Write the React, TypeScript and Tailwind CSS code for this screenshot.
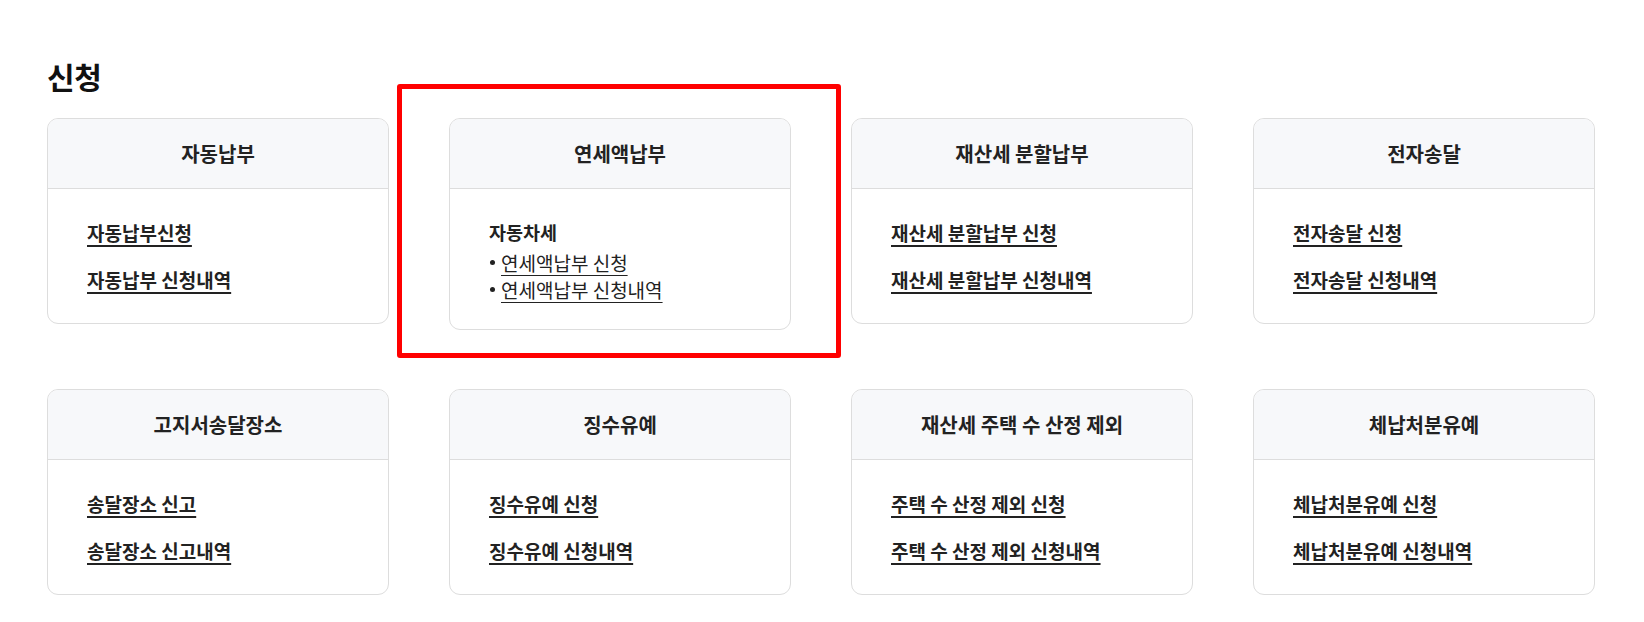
import React from "react";

type Simple = { title: string; links: string[] };

const row1: Simple[] = [
  { title: "자동납부", links: ["자동납부신청", "자동납부 신청내역"] },
  { title: "연세액납부", links: [] },
  { title: "재산세 분할납부", links: ["재산세 분할납부 신청", "재산세 분할납부 신청내역"] },
  { title: "전자송달", links: ["전자송달 신청", "전자송달 신청내역"] },
];

const row2: Simple[] = [
  { title: "고지서송달장소", links: ["송달장소 신고", "송달장소 신고내역"] },
  { title: "징수유예", links: ["징수유예 신청", "징수유예 신청내역"] },
  { title: "재산세 주택 수 산정 제외", links: ["주택 수 산정 제외 신청", "주택 수 산정 제외 신청내역"] },
  { title: "체납처분유예", links: ["체납처분유예 신청", "체납처분유예 신청내역"] },
];

function CardShell({ title, children }: { title: string; children: React.ReactNode }) {
  return (
    <div className="rounded-[11px] border border-[#dddddd] bg-white overflow-hidden">
      <div className="h-[70px] bg-[#f7f8fa] border-b border-[#dddddd] flex items-center justify-center text-[20px] font-bold text-[#222]">
        {title}
      </div>
      {children}
    </div>
  );
}

function SimpleCard({ c }: { c: Simple }) {
  return (
    <CardShell title={c.title}>
      <div className="px-[39px] pt-[30px] pb-[30px] flex flex-col gap-[20px]">
        {c.links.map((l) => (
          <a
            key={l}
            href="#"
            className="self-start text-[19px] leading-[27px] font-bold text-[#222] underline underline-offset-[4px] decoration-[1.5px]"
          >
            {l}
          </a>
        ))}
      </div>
    </CardShell>
  );
}

function AnnualCard() {
  return (
    <div className="relative">
      <CardShell title="연세액납부">
        <div className="px-[39px] pt-[30px] pb-[26px]">
          <div className="text-[18.5px] leading-[26px] font-bold text-[#222]">자동차세</div>
          <ul className="mt-[4px]">
            {["연세액납부 신청", "연세액납부 신청내역"].map((l) => (
              <li key={l} className="flex items-center text-[19px] leading-[27px] text-[#222]">
                <span className="w-[5px] h-[5px] rounded-full bg-[#222] ml-[1px] mr-[6px]" />
                <a href="#" className="underline underline-offset-[4px] decoration-1">
                  {l}
                </a>
              </li>
            ))}
          </ul>
        </div>
      </CardShell>
      <div className="absolute left-[-52px] top-[-34px] right-[-50px] bottom-[-28px] border-[5px] border-[#ff0000] rounded-[3px] pointer-events-none" />
    </div>
  );
}

export default function App() {
  return (
    <div className="w-[1644px] h-[622px] bg-white font-['Noto_Sans_CJK_KR','Noto_Sans',sans-serif] text-[#222]">
      <div className="pl-[47px] pt-[56px]">
        <h2 className="text-[30px] leading-[40px] font-bold tracking-[-0.4px] text-[#111] mb-[22px]">신청</h2>
        <div className="w-[1548px] grid grid-cols-4 gap-x-[60px] gap-y-[59px] items-start">
          {row1.map((c, i) =>
            i === 1 ? <AnnualCard key={c.title} /> : <SimpleCard key={c.title} c={c} />
          )}
          {row2.map((c) => (
            <SimpleCard key={c.title} c={c} />
          ))}
        </div>
      </div>
    </div>
  );
}
